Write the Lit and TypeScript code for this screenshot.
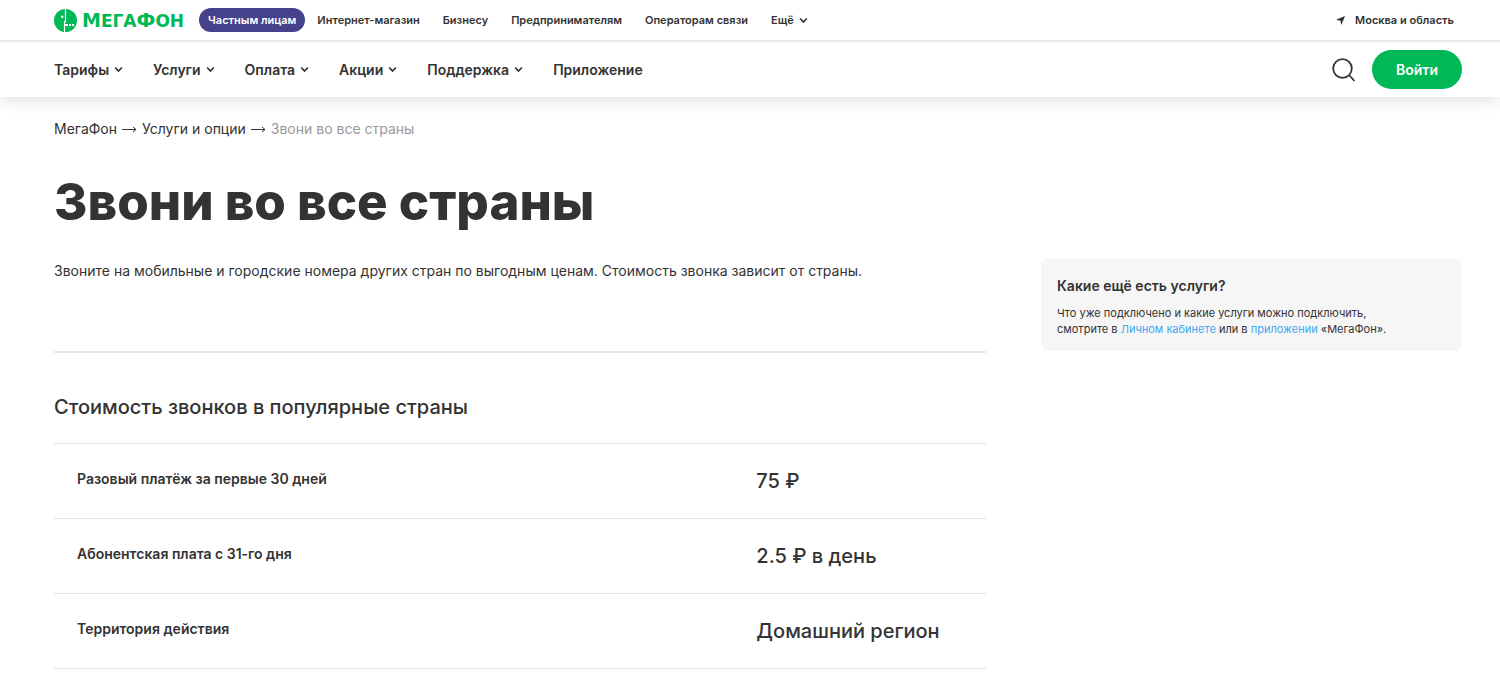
import { LitElement, html, css, svg } from "lit";
import { customElement } from "lit/decorators.js";

const audiences = ["Интернет-магазин", "Бизнесу", "Предпринимателям", "Операторам связи"];
const sections = ["Тарифы", "Услуги", "Оплата", "Акции", "Поддержка"];
const prices = [
  ["Разовый платёж за первые 30 дней", "75 ₽"],
  ["Абонентская плата с 31-го дня", "2.5 ₽ в день"],
  ["Территория действия", "Домашний регион"],
];

const chevron = html`<svg class="chevron" viewBox="0 0 8 6" aria-hidden="true">
  ${svg`<path d="M1 1.2 4 4.4 7 1.2" />`}
</svg>`;

const arrow = html`<svg class="arrow" viewBox="0 0 15 9" aria-hidden="true">
  ${svg`<path d="M0 4.5H14M11 2 14 4.5 11 7" />`}
</svg>`;

@customElement("app-root")
export class AppRoot extends LitElement {
  static styles = css`
    :host {
      display: block;
      min-height: 100vh;
      background: #fff;
      color: #333;
      font-family: Inter, "Noto Sans", sans-serif;
      font-size: 14px;
      line-height: 20px;
    }
    * { box-sizing: border-box; }
    a { color: inherit; text-decoration: none; white-space: nowrap; }
    button { border: 0; background: none; padding: 0; margin: 0; color: inherit; font: inherit; cursor: pointer; white-space: nowrap; }
    ul, ol { list-style: none; margin: 0; padding: 0; display: flex; align-items: center; }
    .top {
      position: relative;
      z-index: 1;
      display: flex;
      align-items: center;
      height: 42px;
      padding: 0 46px 0 54px;
      border-bottom: 2px solid #e9e9e9;
      background: #fff;
      font-size: 11px;
      font-weight: 600;
      line-height: 16px;
    }
    .logo { display: flex; align-items: center; gap: 5px; margin-right: 15px; color: #00b956; }
    .mark { width: 23px; height: 23px; flex: none; }
    .word { font-family: "DejaVu Sans", sans-serif; font-weight: 700; font-size: 17px; line-height: 24px; }
    .word-cap { font-size: 19px; }
    .audiences { gap: 23px; }
    .active { display: block; padding: 4px 9px; border-radius: 12px; background: #45418a; color: #fff; }
    .audiences li:first-child { margin-right: -11px; }
    .more { display: flex; align-items: center; gap: 5px; }
    .chevron { width: 9px; height: 7px; fill: none; stroke: currentColor; stroke-width: 1.5; }
    .region { display: flex; align-items: center; gap: 10px; margin-left: auto; }
    .pin { width: 9px; height: 9px; }
    .main-nav {
      display: flex;
      align-items: center;
      justify-content: space-between;
      height: 55px;
      padding: 0 38px 0 54px;
      box-shadow: 0 2px 16px rgba(0, 0, 0, 0.14);
      font-weight: 600;
    }
    .sections { gap: 30px; }
    .section { display: flex; align-items: center; gap: 5px; }
    .actions { display: flex; align-items: center; gap: 16px; }
    .search { display: flex; }
    .search svg { width: 24px; height: 24px; }
    .login { height: 39px; padding: 0 24px; border-radius: 20px; background: #00b956; color: #fff; }
    .page { padding: 22px 38px 0 54px; }
    .crumbs { gap: 5px; }
    .crumbs li { display: flex; align-items: center; gap: 5px; }
    .arrow { width: 15px; height: 9px; fill: none; stroke: currentColor; stroke-width: 1; }
    .current { color: #999; }
    h1 { margin: 33px 0 0; font-size: 51px; line-height: 60px; font-weight: 800; }
    .columns { display: grid; grid-template-columns: minmax(0, 932fr) minmax(0, 421fr); column-gap: 55px; align-items: start; margin-top: 26px; }
    .lead { margin: 0; padding: 3px 0 70px; border-bottom: 2px solid #e9e9e9; }
    h2 { margin: 0; padding: 42px 0 24px; font-size: 20px; line-height: 24px; font-weight: 500; }
    .prices { width: 100%; border-collapse: collapse; table-layout: fixed; }
    .prices th, .prices td { height: 75px; border-top: 1px solid #e2e2e2; border-bottom: 1px solid #e2e2e2; text-align: left; vertical-align: middle; }
    .prices th { width: 73%; padding: 0 23px 4px; font-weight: 600; font-size: 14px; }
    .prices td { padding: 0 22px; font-weight: 500; font-size: 20px; }
    .card { padding: 18px 16px 14px; border-radius: 8px; background: #f6f6f6; font-size: 11px; line-height: 16px; }
    h3 { margin: 0 0 9px; font-size: 14px; line-height: 20px; font-weight: 600; }
    .card p { margin: 0; }
    .card a { color: #3ea8f0; }
  `;

  render() {
    return html`
      <header>
        <div class="top">
          <a class="logo" href="#" aria-label="МегаФон">
            <svg class="mark" viewBox="0 0 23 23" aria-hidden="true">
              <circle cx="11.5" cy="11.5" r="11.5" fill="#00b956" />
              <path d="M11.5 0V12.5H10.5V23" fill="none" stroke="#fff" stroke-width="1.2" />
              <circle cx="8.2" cy="7.8" r="1.3" fill="#fff" />
              <path d="M10.5 16h3.4M15 16h2M18.1 16h2" stroke="#fff" stroke-width="2" />
            </svg>
            <span class="word"><span class="word-cap">М</span>ЕГА<span class="word-cap">Ф</span>ОН</span>
          </a>
          <nav aria-label="Разделы сайта">
            <ul class="audiences">
              <li><a class="active" href="#">Частным лицам</a></li>
              ${audiences.map((name) => html`<li><a href="#">${name}</a></li>`)}
              <li><button class="more">Ещё ${chevron}</button></li>
            </ul>
          </nav>
          <button class="region">
            <svg class="pin" viewBox="0 0 9 9" aria-hidden="true"><path d="M9 0 5.4 9 4.5 4.8 0 3.8Z" fill="currentColor" /></svg>
            Москва и область
          </button>
        </div>
        <div class="main-nav">
          <nav aria-label="Меню">
            <ul class="sections">
              ${sections.map((name) => html`<li><button class="section">${name} ${chevron}</button></li>`)}
              <li><a href="#">Приложение</a></li>
            </ul>
          </nav>
          <div class="actions">
            <button class="search" aria-label="Поиск">
              <svg viewBox="0 0 24 24" fill="none" stroke="currentColor" stroke-width="1.8" aria-hidden="true">
                <circle cx="10.5" cy="10.5" r="9.3" /><path d="m17 17 5.5 6" />
              </svg>
            </button>
            <button class="login">Войти</button>
          </div>
        </div>
      </header>
      <main class="page">
        <nav aria-label="Путь">
          <ol class="crumbs">
            <li><a href="#">МегаФон</a>${arrow}</li>
            <li><a href="#">Услуги и опции</a>${arrow}</li>
            <li class="current" aria-current="page">Звони во все страны</li>
          </ol>
        </nav>
        <h1>Звони во все страны</h1>
        <div class="columns">
          <section>
            <p class="lead">Звоните на мобильные и городские номера других стран по выгодным ценам. Стоимость звонка зависит от страны.</p>
            <h2>Стоимость звонков в популярные страны</h2>
            <table class="prices">
              <tbody>
                ${prices.map(([name, value]) => html`<tr><th scope="row">${name}</th><td>${value}</td></tr>`)}
              </tbody>
            </table>
          </section>
          <aside class="card">
            <h3>Какие ещё есть услуги?</h3>
            <p>Что уже подключено и какие услуги можно подключить,<br />смотрите в <a href="#">Личном кабинете</a> или в <a href="#">приложении</a> «МегаФон».</p>
          </aside>
        </div>
      </main>
    `;
  }
}
